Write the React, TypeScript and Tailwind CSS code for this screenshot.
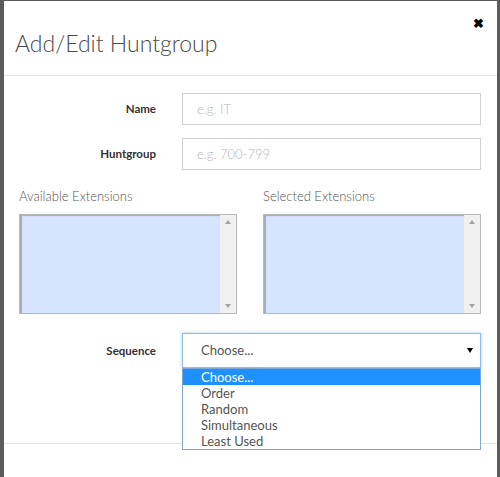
import React from 'react';

const font = { fontFamily: 'Lato, "Open Sans", "Liberation Sans", sans-serif' };

const ListBox: React.FC = () => (
    <div className="flex h-[100px] w-[218px] border border-[#b8b8b8] shadow-[inset_2px_1px_1px_rgba(0,0,0,0.25)] bg-[#d6e4fd]">
        <div className="flex-1" />
        <div className="flex w-[16px] flex-col items-center justify-between bg-[#f0f0f0] py-[5px]">
            <span className="h-0 w-0 border-x-[3px] border-b-[4px] border-x-transparent border-b-[#a3a3a3]" />
            <span className="h-0 w-0 border-x-[3px] border-t-[4px] border-x-transparent border-t-[#a3a3a3]" />
        </div>
    </div>
);

const options = ['Choose...', 'Order', 'Random', 'Simultaneous', 'Least Used'];

export default function App() {
    return (
        <div className="h-[477px] w-[500px] overflow-hidden bg-[#5b5b5b] pl-[4px] pr-[3px] pt-[1px]" style={font}>
            <div className="relative h-full bg-white">
                <div className="flex h-[75px] items-center justify-between border-b border-[#e5e5e5] pl-[11px] pr-[13px]">
                    <h2 className="pt-[10px] text-[23px] font-light text-[#4a4a4a]">Add/Edit Huntgroup</h2>
                    <span className="-mt-[30px] text-[13px] font-black leading-none text-black">✖</span>
                </div>

                <div className="pt-[17px]">
                    <div className="flex items-center">
                        <label className="w-[152px] text-right text-[11.5px] font-bold text-[#333]">Name</label>
                        <input
                            placeholder="e.g. IT"
                            className="ml-[26px] h-[32px] w-[299px] border border-[#cfcfcf] px-[14px] text-[13px] font-light placeholder:text-[#b5b5b5]"
                        />
                    </div>
                    <div className="mt-[13px] flex items-center">
                        <label className="w-[152px] text-right text-[11.5px] font-bold text-[#333]">Huntgroup</label>
                        <input
                            placeholder="e.g. 700-799"
                            className="ml-[26px] h-[32px] w-[299px] border border-[#cfcfcf] px-[14px] text-[13px] font-light placeholder:text-[#b5b5b5]"
                        />
                    </div>

                    <div className="mt-[19px] flex gap-[26px] pl-[15px]">
                        <div>
                            <div className="mb-[10px] text-[13px] font-light leading-[15px] text-[#555]">Available Extensions</div>
                            <ListBox />
                        </div>
                        <div>
                            <div className="mb-[10px] text-[13px] font-light leading-[15px] text-[#555]">Selected Extensions</div>
                            <ListBox />
                        </div>
                    </div>

                    <div className="mt-[19px] flex items-start">
                        <label className="w-[152px] pt-[9px] text-right text-[11.5px] font-bold text-[#333]">Sequence</label>
                        <div className="relative ml-[26px] w-[299px]">
                            <div className="flex h-[35px] items-center justify-between border border-[#8fbcec] pl-[18px] pr-[7px] shadow-[0_0_3px_rgba(102,175,233,0.6)]">
                                <span className="text-[13px] text-[#555]">Choose...</span>
                                <span className="h-0 w-0 border-x-[3px] border-t-[5px] border-x-transparent border-t-black" />
                            </div>
                            <div className="absolute left-0 top-[35px] z-10 w-full border border-[#7fa6d9] bg-white">
                                {options.map((o, i) => (
                                    <div
                                        key={o}
                                        className={
                                            i === 0
                                                ? 'h-[16px] bg-[#1e90ff] pl-[18px] text-[13px] leading-[16px] text-white'
                                                : 'h-[16px] pl-[18px] text-[13px] leading-[16px] text-[#555]'
                                        }
                                    >
                                        {o}
                                    </div>
                                ))}
                            </div>
                        </div>
                    </div>
                </div>

                <div className="absolute left-0 right-0 top-[442px] border-t border-[#e5e5e5]" />
            </div>
        </div>
    );
}
